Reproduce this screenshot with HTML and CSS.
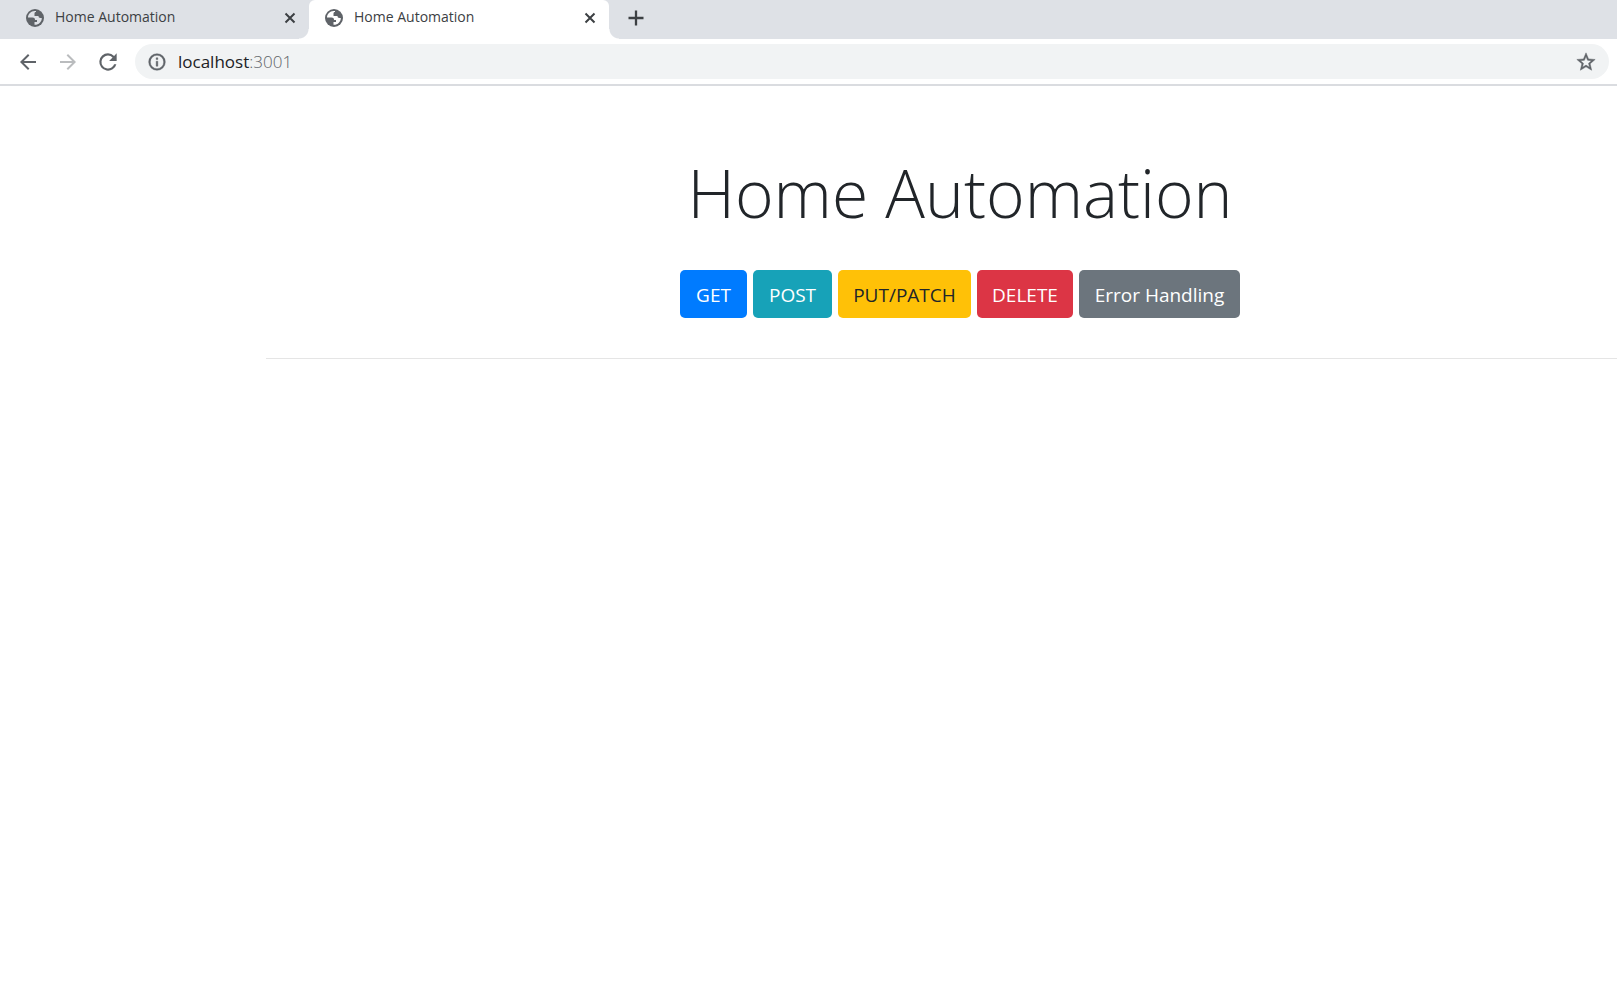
FILE: index.html
```html
<!DOCTYPE html>
<html lang="en">
<head>
<meta charset="utf-8">
<title>Home Automation</title>
<link rel="stylesheet" href="styles.css">
</head>
<body>
<svg width="0" height="0" class="defs" aria-hidden="true">
  <symbol id="globe" viewBox="0 0 18 18"><circle cx="9" cy="9" r="9" fill="#5f6368"/><path d="M8.500 2C5 2 2 5 2 8.500h4.500c2 0 2.500 1 2.500 2.500h2v2H8.500v2.800c4 .3 7.300-2.800 7.300-6.800h-1.300c-1.500 0-2-.7-2-2H8.500V4.500c0-1 .5-1.500 1.500-1.500V2z" fill="currentColor"/></symbol>
  <symbol id="close" viewBox="0 0 12 12"><path d="M1.500 1.500l9 9M10.500 1.500l-9 9" fill="none" stroke="#3c4043" stroke-width="2"/></symbol>
</svg>
<header class="browser">
  <div class="tabs">
    <div class="tab">
      <svg class="favicon"><use href="#globe"/></svg>
      <span class="tab-title">Home Automation</span>
      <button class="icon-button" aria-label="Close tab"><svg class="close"><use href="#close"/></svg></button>
    </div>
    <div class="tab tab-active">
      <svg class="favicon"><use href="#globe"/></svg>
      <span class="tab-title">Home Automation</span>
      <button class="icon-button" aria-label="Close tab"><svg class="close"><use href="#close"/></svg></button>
    </div>
    <button class="icon-button new-tab" aria-label="New tab"><svg width="16" height="16" viewBox="0 0 16 16"><path d="M8 .5v15M.5 8h15" stroke="#3c4043" stroke-width="2.300"/></svg></button>
  </div>
  <div class="toolbar">
    <button class="icon-button" aria-label="Back"><svg width="24" height="24" viewBox="0 0 24 24" fill="#5f6368"><path d="M20 11H7.830l5.590-5.590L12 4l-8 8 8 8 1.410-1.410L7.830 13H20z"/></svg></button>
    <button class="icon-button" aria-label="Forward"><svg width="24" height="24" viewBox="0 0 24 24" fill="#babcbe"><path d="M12 4l-1.410 1.410L16.170 11H4v2h12.170l-5.580 5.590L12 20l8-8z"/></svg></button>
    <button class="icon-button" aria-label="Reload"><svg width="26" height="26" viewBox="0 0 24 24" fill="#5f6368"><path d="M17.650 6.350A7.960 7.960 0 0 0 12 4a8 8 0 1 0 7.730 10h-2.080A6 6 0 1 1 12 6c1.660 0 3.140.690 4.220 1.780L13 11h7V4z"/></svg></button>
    <div class="address">
      <svg width="20" height="20" viewBox="0 0 24 24" fill="#5f6368" stroke="#5f6368" stroke-width=".5"><path d="M11 17h2v-6h-2v6zm1-15a10 10 0 1 0 0 20 10 10 0 0 0 0-20zm0 18a8 8 0 1 1 0-16 8 8 0 0 1 0 16zM11 9h2V7h-2z"/></svg>
      <span class="url">localhost<span class="port">:3001</span></span>
      <button class="icon-button" aria-label="Bookmark this page"><svg width="22" height="22" viewBox="0 0 24 24" fill="#5f6368" stroke="#5f6368" stroke-width=".5"><path d="M22 9.240l-7.190-.62L12 2 9.190 8.630 2 9.240l5.460 4.730L5.820 21 12 17.270 18.180 21l-1.630-7.030L22 9.240zM12 15.400l-3.760 2.270 1-4.280-3.320-2.880 4.380-.38L12 6.100l1.710 4.040 4.380.38-3.320 2.880 1 4.280L12 15.400z"/></svg></button>
    </div>
  </div>
</header>
<main class="page">
  <h1>Home Automation</h1>
  <div class="actions">
    <button class="btn btn-primary">GET</button>
    <button class="btn btn-info">POST</button>
    <button class="btn btn-warning">PUT/PATCH</button>
    <button class="btn btn-danger">DELETE</button>
    <button class="btn btn-secondary">Error Handling</button>
  </div>
  <hr>
</main>
</body>
</html>
```
FILE: styles.css
```css
* { box-sizing: border-box; }
body {
  margin: 0;
  background: #fff;
  color: #212529;
  font-family: "Open Sans", "Noto Sans", sans-serif;
  overflow: hidden;
}
svg { display: block; flex: none; }
.defs { position: absolute; }
button { font-family: inherit; cursor: pointer; }
.icon-button {
  display: grid;
  place-items: center;
  width: 40px;
  height: 32px;
  padding: 0;
  border: 0;
  background: none;
}
.tabs {
  display: flex;
  height: 39px;
  padding-left: 10px;
  background: #dee1e6;
}
.tab {
  position: relative;
  display: flex;
  align-items: center;
  width: 299px;
  height: 39px;
  padding: 0 0 4px 16px;
}
.tab .icon-button { width: 38px; }
.tab-active {
  width: 300px;
  background: #fff;
  border-radius: 6px 6px 0 0;
}
.tab-active::before,
.tab-active::after {
  content: "";
  position: absolute;
  bottom: 0;
  width: 10px;
  height: 10px;
}
.tab-active::before {
  right: 100%;
  background: radial-gradient(circle at 0 0, #dee1e6 9px, #fff 10px);
}
.tab-active::after {
  left: 100%;
  background: radial-gradient(circle at 100% 0, #dee1e6 9px, #fff 10px);
}
.favicon { width: 18px; height: 18px; color: #dee1e6; }
.tab-active .favicon { color: #fff; }
.close { width: 12px; height: 12px; }
.tab-title {
  flex: 1;
  margin-left: 11px;
  padding-bottom: 1px;
  font-size: 14px;
  line-height: 20px;
  color: #3c4043;
}
.new-tab { width: 54px; height: 36px; }
.toolbar {
  display: flex;
  align-items: center;
  height: 47px;
  padding: 0 8px;
  border-bottom: 2px solid #dadce0;
}
.address {
  flex: 1;
  display: flex;
  align-items: center;
  height: 35px;
  margin-left: 7px;
  padding-left: 12px;
  border-radius: 18px;
  background: #f1f3f4;
}
.url {
  flex: 1;
  margin-left: 11px;
  font-size: 17px;
  line-height: 24px;
  color: #202124;
}
.port { color: #5f6368; font-weight: 300; }
.address .icon-button { width: 46px; }
.page {
  margin: 0 -37px 0 266px;
  padding-top: 64px;
}
h1 {
  margin: 0;
  font-size: 66px;
  font-weight: 300;
  line-height: 84px;
  text-align: center;
}
.actions {
  display: grid;
  grid-template-columns: 67px 79px 133px 96px 161px;
  justify-content: center;
  gap: 6px;
  margin-top: 36px;
}
.btn {
  height: 48px;
  padding: 2px 0 0;
  border: 0;
  border-radius: 5px;
  color: #fff;
  font-size: 19px;
  line-height: 30px;
}
.btn-primary { background: #007bff; }
.btn-info { background: #17a2b8; }
.btn-warning { background: #ffc107; color: #212529; }
.btn-danger { background: #dc3545; }
.btn-secondary { background: #6c757d; }
hr {
  height: 1px;
  margin: 40px 0 0;
  border: 0;
  background: #e5e5e5;
}
```
